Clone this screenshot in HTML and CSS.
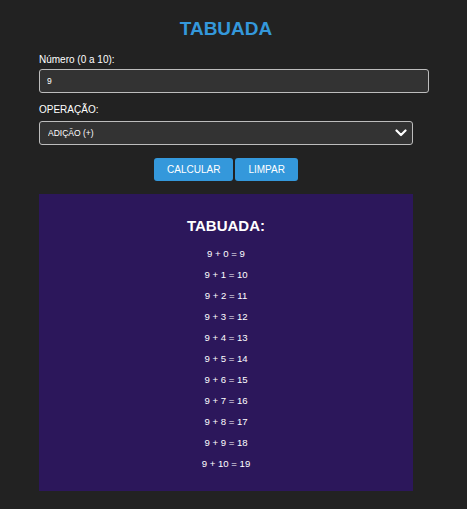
FILE: index.html
```html
<!DOCTYPE html>
<html lang="pt-BR">
<head>
<meta charset="utf-8">
<title>Tabuada</title>
<link rel="stylesheet" href="styles.css">
</head>
<body>
<div class="page">
  <main class="container">
    <h1 class="title">TABUADA</h1>
    <label class="label" for="numero">Número (0 a 10):</label>
    <input class="input" id="numero" type="number" value="9">
    <label class="label label-op" for="operacao">OPERAÇÃO:</label>
    <div class="select-wrap">
      <select class="select" id="operacao">
        <option>ADIÇÃO (+)</option>
        <option>SUBTRAÇÃO (-)</option>
        <option>MULTIPLICAÇÃO (x)</option>
        <option>DIVISÃO (÷)</option>
      </select>
      <svg class="chevron" width="12" height="8" viewBox="0 0 12 8" aria-hidden="true">
        <path d="M1.5 1.5 L6 6 L10.5 1.5" fill="none" stroke="#fff" stroke-width="2.2" stroke-linecap="round" stroke-linejoin="round"/>
      </svg>
    </div>
    <div class="buttons">
      <button class="btn" type="button">CALCULAR</button>
      <button class="btn" type="button">LIMPAR</button>
    </div>
    <section class="result">
      <h3 class="result-title">TABUADA:</h3>
      <div class="rows">
        <p class="row">9 + 0 = 9</p>
        <p class="row">9 + 1 = 10</p>
        <p class="row">9 + 2 = 11</p>
        <p class="row">9 + 3 = 12</p>
        <p class="row">9 + 4 = 13</p>
        <p class="row">9 + 5 = 14</p>
        <p class="row">9 + 6 = 15</p>
        <p class="row">9 + 7 = 16</p>
        <p class="row">9 + 8 = 17</p>
        <p class="row">9 + 9 = 18</p>
        <p class="row">9 + 10 = 19</p>
      </div>
    </section>
  </main>
</div>
</body>
</html>
```

FILE: styles.css
```css
html, body {
  margin: 0;
  padding: 0;
  background: #222222;
  color: #ffffff;
  font-family: "Liberation Sans", Arial, sans-serif;
}

.page {
  width: 452px;
}

.container {
  width: 374px;
  margin: 0 auto;
  padding-top: 18px;
  display: flex;
  flex-direction: column;
}

.title {
  margin: 0 0 14px;
  font-size: 19px;
  line-height: 22px;
  font-weight: bold;
  color: #3498db;
  text-align: center;
}

.label {
  display: block;
  font-size: 10px;
  line-height: 12px;
  margin-bottom: 3px;
  color: #ffffff;
}

.label-op {
  margin-bottom: 5px;
}

.input {
  width: 390px;
  height: 24px;
  box-sizing: border-box;
  margin: 0 0 11px;
  padding: 0 7px;
  background: #333333;
  border: 1px solid #bdbdbd;
  border-radius: 3px;
  color: #ffffff;
  font-family: "Liberation Sans", Arial, sans-serif;
  font-size: 8.5px;
  outline: none;
  -moz-appearance: textfield;
}

.input::-webkit-outer-spin-button,
.input::-webkit-inner-spin-button {
  -webkit-appearance: none;
  margin: 0;
}

.select-wrap {
  position: relative;
  width: 374px;
  height: 24px;
  margin-bottom: 13px;
}

.select {
  -webkit-appearance: none;
  appearance: none;
  width: 100%;
  height: 24px;
  box-sizing: border-box;
  margin: 0;
  padding: 0 8px;
  background: #333333;
  border: 1px solid #bdbdbd;
  border-radius: 3px;
  color: #ffffff;
  font-family: "Liberation Sans", Arial, sans-serif;
  font-size: 8.5px;
  outline: none;
}

.chevron {
  position: absolute;
  right: 6px;
  top: 8px;
  pointer-events: none;
}

.buttons {
  display: flex;
  justify-content: center;
  gap: 2px;
  margin-bottom: 13px;
}

.btn {
  height: 23px;
  padding: 0 13px;
  margin: 0;
  border: none;
  border-radius: 3px;
  background: #3498db;
  color: #ffffff;
  font-family: "Liberation Sans", Arial, sans-serif;
  font-size: 10px;
  line-height: 23px;
}

.result {
  background: #2c175b;
  padding: 23px 0 22px;
  text-align: center;
}

.result-title {
  margin: 0 0 14px;
  font-size: 15px;
  line-height: 17px;
  font-weight: bold;
}

.rows {
  display: flex;
  flex-direction: column;
  gap: 10px;
}

.row {
  margin: 0;
  font-size: 9.6px;
  line-height: 11px;
}
```
